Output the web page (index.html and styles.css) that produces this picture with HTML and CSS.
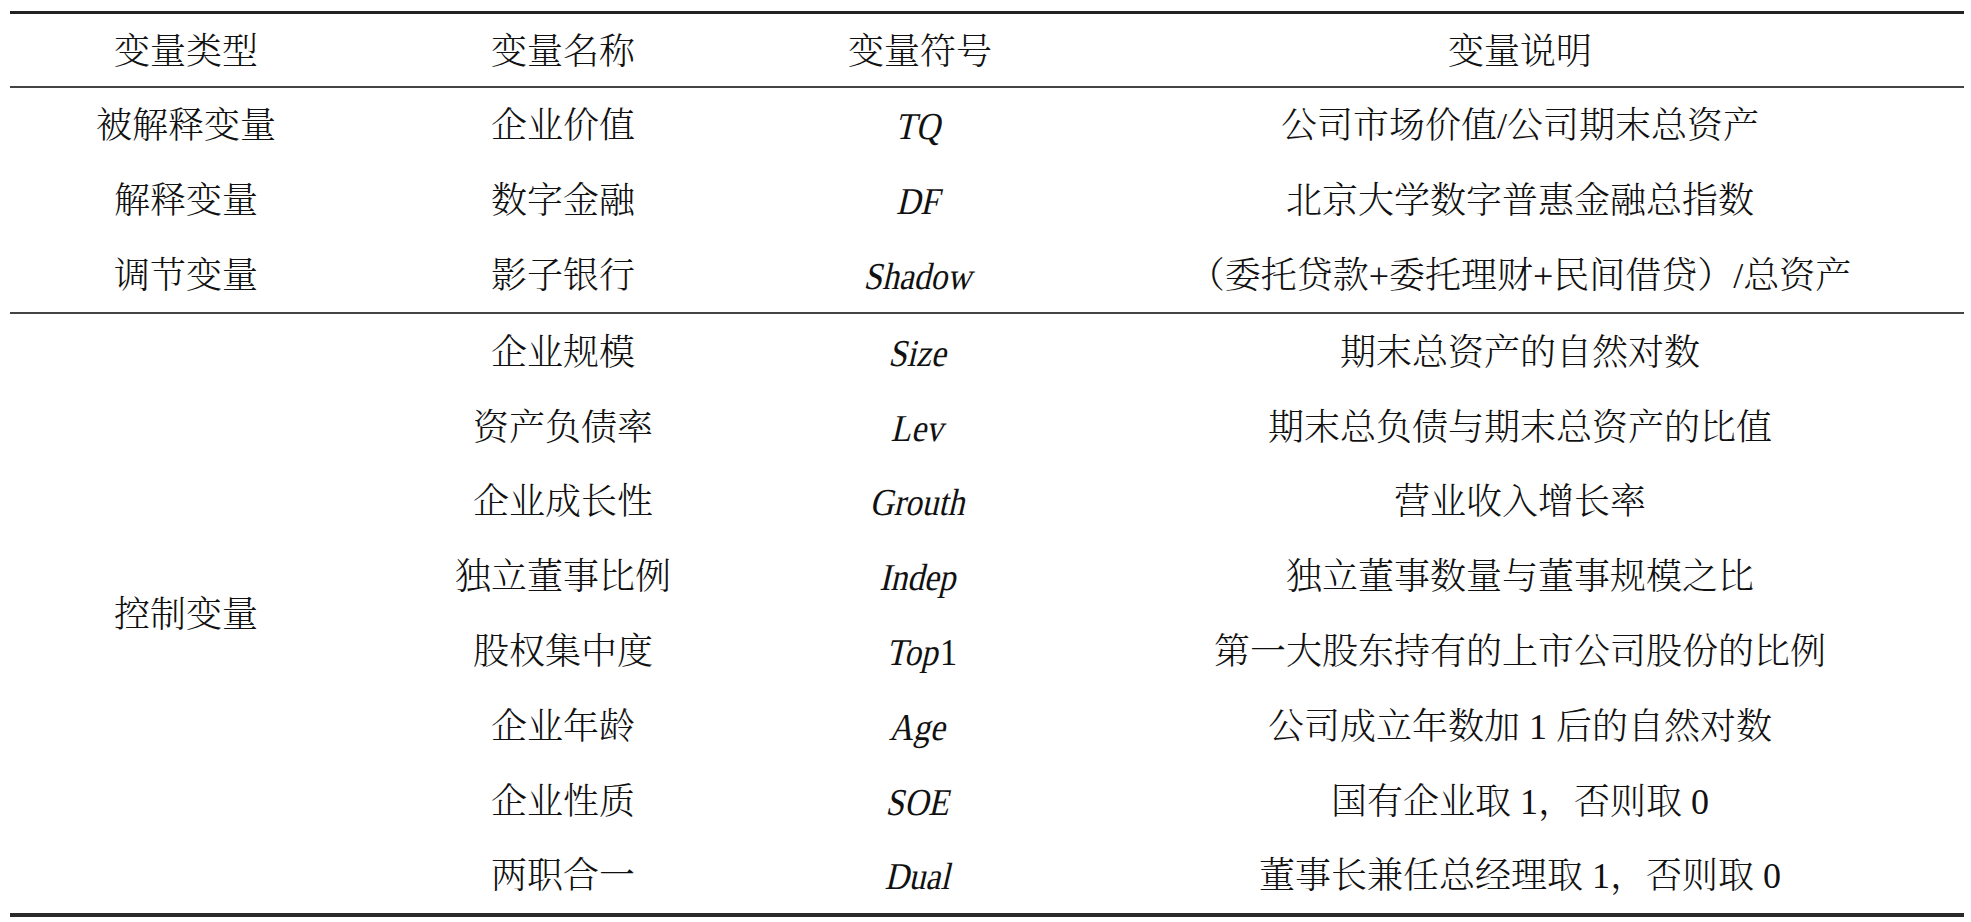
FILE: index.html
```html
<!DOCTYPE html>
<html lang="zh-CN">
<head>
<meta charset="utf-8">
<title>变量定义</title>
<link rel="stylesheet" href="styles.css">
</head>
<body>
<table class="vars">
  <colgroup>
    <col class="c1"><col class="c2"><col class="c3"><col class="c4">
  </colgroup>
  <thead>
    <tr><th>变量类型</th><th>变量名称</th><th>变量符号</th><th>变量说明</th></tr>
  </thead>
  <tbody class="g1">
    <tr><td>被解释变量</td><td>企业价值</td><td class="sym"><span class="it">TQ</span></td><td>公司市场价值/公司期末总资产</td></tr>
    <tr><td>解释变量</td><td>数字金融</td><td class="sym"><span class="it">DF</span></td><td>北京大学数字普惠金融总指数</td></tr>
    <tr><td>调节变量</td><td>影子银行</td><td class="sym"><span class="it">Shadow</span></td><td>（委托贷款+委托理财+民间借贷）/总资产</td></tr>
  </tbody>
  <tbody class="g2">
    <tr><td rowspan="8">控制变量</td><td>企业规模</td><td class="sym"><span class="it">Size</span></td><td>期末总资产的自然对数</td></tr>
    <tr><td>资产负债率</td><td class="sym"><span class="it">Lev</span></td><td>期末总负债与期末总资产的比值</td></tr>
    <tr><td>企业成长性</td><td class="sym"><span class="it">Grouth</span></td><td>营业收入增长率</td></tr>
    <tr><td>独立董事比例</td><td class="sym"><span class="it">Indep</span></td><td>独立董事数量与董事规模之比</td></tr>
    <tr><td>股权集中度</td><td class="sym"><span class="it tight">Top</span><span class="up">1</span></td><td>第一大股东持有的上市公司股份的比例</td></tr>
    <tr><td>企业年龄</td><td class="sym"><span class="it">Age</span></td><td>公司成立年数加 1 后的自然对数</td></tr>
    <tr><td>企业性质</td><td class="sym"><span class="it">SOE</span></td><td>国有企业取 1，否则取 0</td></tr>
    <tr><td>两职合一</td><td class="sym"><span class="it">Dual</span></td><td>董事长兼任总经理取 1，否则取 0</td></tr>
  </tbody>
</table>
</body>
</html>
```
FILE: styles.css
```css
html, body {
  margin: 0;
  padding: 0;
  background: #ffffff;
}

body {
  padding: 11px 7px 0 10px;
  font-family: "Liberation Serif", "Noto Serif CJK SC", "Noto Sans CJK SC", serif;
  color: #111111;
}

.vars {
  width: 1954px;
  border-collapse: collapse;
  table-layout: fixed;
  border-top: 3px solid #222222;
  border-bottom: 4px solid #2a2a2a;
  font-size: 36px;
  font-weight: 300;
}

.c1 { width: 352px; }
.c2 { width: 402px; }
.c3 { width: 312px; }
.c4 { width: 888px; }

.vars th,
.vars td {
  padding: 0;
  text-align: center;
  vertical-align: middle;
  font-weight: 300;
  white-space: nowrap;
  line-height: 1;
}

.vars th {
  height: 68px;
  padding-top: 4px;
  border-bottom: 2px solid #444444;
}

.vars td {
  height: 72.8px;
  padding-top: 2px;
}

.g1 tr:last-child td {
  border-bottom: 2px solid #444444;
}

.sym {
  font-family: "Liberation Serif", serif;
  font-size: 38px;
  font-weight: 400;
}

.it {
  display: inline-block;
  font-style: normal;
  font-weight: 400;
  transform: skewX(-13deg) scaleX(0.88);
}

.it.tight {
  transform-origin: right center;
  margin-right: -2px;
}

.up {
  display: inline-block;
  font-weight: 400;
  transform: scaleX(0.9);
}
```
